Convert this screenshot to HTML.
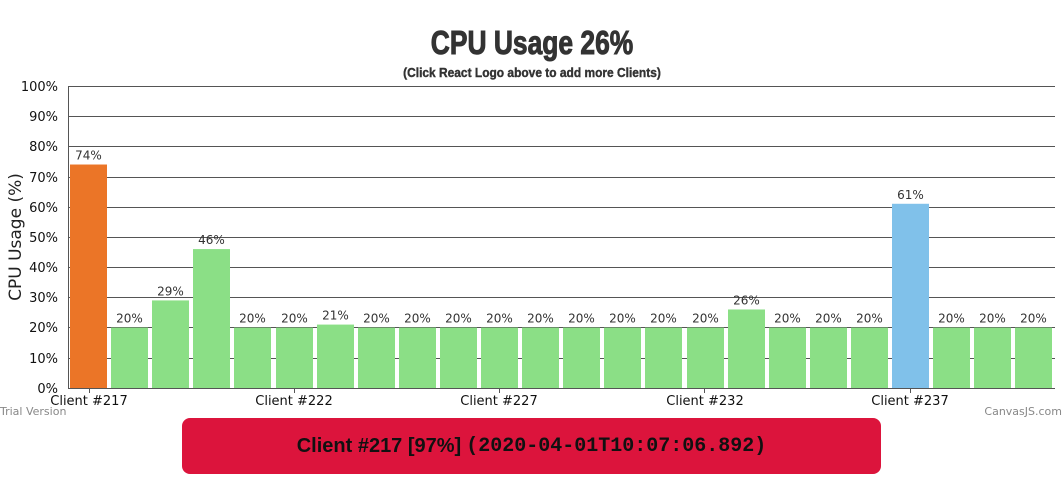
<!DOCTYPE html>
<html><head><meta charset="utf-8"><style>
body{margin:0;width:1064px;height:484px;background:#fff;overflow:hidden;position:relative;font-family:"DejaVu Sans","Liberation Sans",sans-serif}
svg{position:absolute;left:0;top:0}
.btn{position:absolute;left:182px;top:418px;width:699px;height:56px;background:#dc143c;border-radius:8px;display:flex;align-items:center;justify-content:center;font-family:"Liberation Sans",sans-serif;font-weight:bold;font-size:20px;color:#111}
.btn span{font-family:"Liberation Mono",monospace;font-weight:bold;font-size:20px;margin-left:5px}
</style></head><body>
<svg width="1064" height="484" xmlns="http://www.w3.org/2000/svg">
<text x="532" y="54" text-anchor="middle" font-family="Liberation Sans Narrow, Liberation Sans, sans-serif" font-weight="bold" font-size="33" fill="#333" stroke="#333" stroke-width="1" transform="translate(532 0) scale(0.8 1) translate(-532 0)">CPU Usage 26%</text>
<text x="532" y="77" text-anchor="middle" font-family="Liberation Sans Narrow, Liberation Sans, sans-serif" font-weight="bold" font-size="13" fill="#333" stroke="#333" stroke-width="0.4" transform="translate(532 0) scale(0.92 1) translate(-532 0)">(Click React Logo above to add more Clients)</text>
<g stroke="#555" stroke-width="1">
<line x1="68" y1="86.5" x2="1055" y2="86.5"/><line x1="68" y1="116.5" x2="1055" y2="116.5"/><line x1="68" y1="146.5" x2="1055" y2="146.5"/><line x1="68" y1="177.5" x2="1055" y2="177.5"/><line x1="68" y1="207.5" x2="1055" y2="207.5"/><line x1="68" y1="237.5" x2="1055" y2="237.5"/><line x1="68" y1="267.5" x2="1055" y2="267.5"/><line x1="68" y1="297.5" x2="1055" y2="297.5"/><line x1="68" y1="327.5" x2="1055" y2="327.5"/><line x1="68" y1="358.5" x2="1055" y2="358.5"/>
<line x1="68.5" y1="86" x2="68.5" y2="389"/><line x1="68" y1="388.5" x2="1055" y2="388.5"/>
<line x1="89.5" y1="388" x2="89.5" y2="393"/><line x1="294.5" y1="388" x2="294.5" y2="393"/><line x1="499.5" y1="388" x2="499.5" y2="393"/><line x1="704.5" y1="388" x2="704.5" y2="393"/><line x1="910.5" y1="388" x2="910.5" y2="393"/>
</g>
<g font-size="13" fill="#111" text-anchor="end">
<text x="58" y="91">100%</text><text x="58" y="121">90%</text><text x="58" y="151">80%</text><text x="58" y="182">70%</text><text x="58" y="212">60%</text><text x="58" y="242">50%</text><text x="58" y="272">40%</text><text x="58" y="302">30%</text><text x="58" y="332">20%</text><text x="58" y="363">10%</text><text x="58" y="393">0%</text>
</g>
<text transform="translate(21 237) rotate(-90)" text-anchor="middle" font-size="17" fill="#222">CPU Usage (%)</text>
<g id="bars"></g>
<g font-size="13" fill="#111" text-anchor="middle">
<text x="89" y="405">Client #217</text><text x="294" y="405">Client #222</text><text x="499" y="405">Client #227</text><text x="705" y="405">Client #232</text><text x="910" y="405">Client #237</text>
</g>
<text x="0" y="415" font-size="11" fill="#888">Trial Version</text>
<text x="1062" y="415" font-size="11" fill="#888" text-anchor="end">CanvasJS.com</text>
</svg>
<div class="btn">Client #217 [97%]<span>(2020-04-01T10:07:06.892)</span></div>
<script>
var v=[74,20,29,46,20,20,21,20,20,20,20,20,20,20,20,20,26,20,20,20,61,20,20,20];
var g=document.getElementById('bars'),s='';
v.forEach(function(d,i){var x=Math.round(70+41.1*i),h=d*3.02,y=388-h,c=i==0?'#eb7527':(i==20?'#80c1ea':'#8bdf86');
s+='<rect x="'+x+'" y="'+y+'" width="37" height="'+h+'" fill="'+c+'"/>';
s+='<text x="'+(x+18.5)+'" y="'+(y-5)+'" font-size="12" fill="#333" text-anchor="middle">'+d+'%</text>';});
g.innerHTML=s;
</script>
</body></html>
